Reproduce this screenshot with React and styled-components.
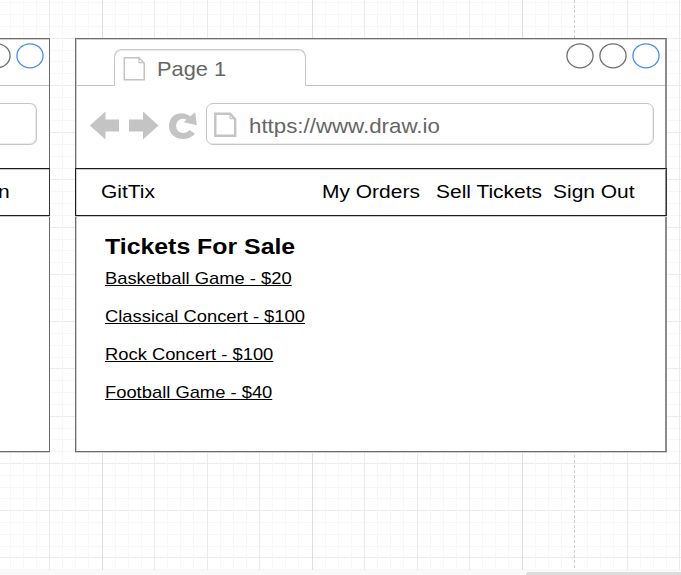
import React from "react";
import styled, { createGlobalStyle } from "styled-components";

const GlobalStyle = createGlobalStyle`
  body {
    margin: 0;
    background: #fff;
    overflow: hidden;
    font-family: "Liberation Sans", Arial, Helvetica, sans-serif;
  }
  *, *::before, *::after { box-sizing: border-box; }
`;

const Canvas = styled.main`
  position: relative;
  width: 681px;
  height: 575px;
  overflow: hidden;
  background: #fff;
`;

const GridLines = styled.svg`
  display: block;
`;

const ScrollTrack = styled.div`
  position: absolute;
  left: 0;
  right: 0;
  bottom: 0;
  height: 5px;
  padding-top: 2px;
  background: #f8f9f9;
`;

const ScrollThumb = styled.div`
  height: 3px;
  margin-left: 526px;
  border-top-left-radius: 3px;
  background: #dcdcdc;
`;

const BrowserWindow = styled.section`
  position: absolute;
  top: 38px;
  left: ${(p) => p.$left}px;
  width: ${(p) => p.$width}px;
  height: 414px;
  display: flex;
  flex-direction: column;
  background: #fff;
  border: 1px solid #6c6c6c;
  border-right-width: ${(p) => (p.$clipped ? 1 : 2)}px;
  border-right-color: ${(p) => (p.$clipped ? "#6c6c6c" : "#8c8c8c")};
  border-left-width: ${(p) => (p.$clipped ? 0 : 1)}px;
  box-shadow: 0 1px 0 #d0d0d0, inset ${(p) => (p.$clipped ? 0 : 1)}px 1px 0 #cfcfcf;
`;

const TabStrip = styled.header`
  display: flex;
  align-items: flex-end;
  height: 47px;
`;

const StripEdge = styled.div`
  height: 47px;
  min-width: 0;
  border-bottom: 1px solid #c2c2c2;
  ${(p) => (p.$width ? `width: ${p.$width}px;` : "flex: 1;")}
  display: flex;
  justify-content: flex-end;
  gap: 5px;
  padding: 4px ${(p) => p.$pad || 0}px 0 0;
`;

const Tab = styled.div`
  display: flex;
  align-items: center;
  gap: 11px;
  width: 192px;
  height: 37px;
  padding: 2px 0 0 8px;
  border: 1.5px solid #c6c6c6;
  border-bottom: 0;
  border-radius: 8px 8px 0 0;
  box-shadow: inset 0 1px 0 #ececec;
`;

const Circle = styled.svg`
  flex: none;
  width: 28px;
  height: 26px;
  fill: none;
  stroke: ${(p) => (p.$active ? "#4a90e8" : "#707070")};
  stroke-width: 1.3;
`;

const Toolbar = styled.div`
  display: flex;
  align-items: center;
  height: 82px;
  padding: 0 ${(p) => (p.$clipped ? 12 : 11)}px 5px ${(p) => (p.$clipped ? 0 : 13)}px;
`;

const ToolIcon = styled.svg`
  flex: none;
  width: ${(p) => p.$width}px;
  height: 32px;
  margin-right: ${(p) => p.$gap}px;
  fill: #c4c4c4;
`;

const AddressBar = styled.div`
  flex: 1;
  display: flex;
  align-items: center;
  height: 42px;
  margin-bottom: 1px;
  padding: 1px 0 0 ${(p) => (p.$clipped ? 0 : 7)}px;
  gap: 11.5px;
  border: 1.5px solid #c6c6c6;
  border-radius: 7px;
  box-shadow: inset -1px -1px 0 #ececec;
  ${(p) => p.$clipped && "border-left: 0; border-top-left-radius: 0; border-bottom-left-radius: 0;"}
`;

const PageIcon = styled.svg`
  flex: none;
  width: 23px;
  height: 26px;
  fill: none;
  stroke: #c4c4c4;
`;

const Label = styled.span`
  display: block;
  flex: none;
  width: max-content;
  white-space: pre;
  font-size: ${(p) => p.$size}px;
  line-height: 24px;
  color: ${(p) => p.$color || "#000"};
  transform: scaleX(${(p) => p.$stretch || 1.11});
  transform-origin: left center;
`;

const Address = styled(Label)`
  padding-top: 2px;
`;

const NavBar = styled.nav`
  display: flex;
  align-items: center;
  height: 48px;
  margin: 0 ${(p) => (p.$clipped ? -1 : -2)}px 0 ${(p) => (p.$clipped ? 0 : -1)}px;
  border: 1px solid #1c1c1c;
  border-right-color: #333;
  ${(p) => p.$clipped && "border-left: 0; justify-content: flex-end; padding-right: 40.5px;"}
  box-shadow: inset 0 1px 0 #c8c8c8, 0 1px 0 #c8c8c8;
`;

const NavSlot = styled.div`
  flex: none;
  width: ${(p) => p.$width}px;
`;

const Content = styled.div`
  padding: 19px 0 0 28.5px;
`;

const Heading = styled(Label).attrs({ as: "h1" })`
  margin: 0;
  font-weight: 700;
`;

const TicketList = styled.ul`
  display: grid;
  grid-auto-rows: 37.8px;
  margin: 8.3px 0 0;
  padding: 0;
  list-style: none;
`;

const TicketLink = styled(Label).attrs({ as: "a" })`
  text-decoration: underline;
  text-decoration-thickness: 1.3px;
  text-underline-offset: 1px;
`;

const tickets = [
  "Basketball Game - $20",
  "Classical Concert - $100",
  "Rock Concert - $100",
  "Football Game - $40",
];

const strongColumns = [4, 20, 36];
const dashedColumn = 40;

function columnTone(i) {
  if (i === dashedColumn) return "#cfcfcf";
  if (strongColumns.includes(i)) return "#dedede";
  return i % 4 === 0 ? "#ebebeb" : "#f7f7f7";
}

function Grid() {
  const columns = [];
  for (let i = -3; i < 49; i++) {
    const x = Math.floor(49.5 + i * 13.125) + 0.5;
    columns.push(
      <line key={i} x1={x} x2={x} y1="0" y2="570"
        stroke={columnTone(i)}
        strokeDasharray={i === dashedColumn ? "3 2" : undefined} />
    );
  }
  const rows = [];
  for (let i = -3; i < 46; i++) {
    const y = Math.floor(38.2 + i * 11.8125) + 0.5;
    rows.push(
      <line key={i} x1="0" x2="681" y1={y} y2={y} stroke={i % 4 === 0 ? "#ececec" : "#f7f7f7"} />
    );
  }
  return (
    <GridLines width="681" height="575" aria-hidden="true">
      {rows}
      {columns}
    </GridLines>
  );
}

function WindowCircle({ active }) {
  return (
    <Circle $active={active} viewBox="0 0 28 26">
      <ellipse cx="14" cy="12.8" rx="13.1" ry="12" />
    </Circle>
  );
}

function Page({ weight }) {
  return (
    <PageIcon viewBox="0 0 23 26" strokeWidth={weight}>
      <path d="M1.3 1.8H16L21.2 7.3V23.7H1.3Z" />
      <path d="M16 1.8V6.7H21.2" strokeWidth="1.2" />
    </PageIcon>
  );
}

export default function App() {
  return (
    <>
      <GlobalStyle />
      <Canvas>
        <Grid />

        <BrowserWindow $left={0} $width={50} $clipped>
          <TabStrip>
            <StripEdge $pad={5.5}>
              <WindowCircle />
              <WindowCircle active />
            </StripEdge>
          </TabStrip>
          <Toolbar $clipped>
            <AddressBar $clipped />
          </Toolbar>
          <NavBar $clipped>
            <Label $size={18.9}>n</Label>
          </NavBar>
        </BrowserWindow>

        <BrowserWindow $left={75} $width={592}>
          <TabStrip>
            <StripEdge $width={38} />
            <Tab>
              <Page weight="1.5" />
              <Label $size={20.2} $stretch={1.08} $color="#666">Page 1</Label>
            </Tab>
            <StripEdge $pad={5}>
              <WindowCircle />
              <WindowCircle />
              <WindowCircle active />
            </StripEdge>
          </TabStrip>
          <Toolbar>
            <ToolIcon $width={30} $gap={10} viewBox="0 0 30 32">
              <path d="M.8 16.5 16.5 2.5V10.5H30V22.5H16.5V30.5Z" />
            </ToolIcon>
            <ToolIcon $width={30} $gap={10} viewBox="0 0 30 32">
              <path d="M29.5 16.5 14 2.5V10.5H0V22.5H14V30.5Z" />
            </ToolIcon>
            <ToolIcon $width={28} $gap={9} viewBox="0 0 28 32">
              <path d="M21.2 7.2 26.2 3.3 27.8 16.2 14.5 13.3 17.5 10.7C12.5 8.1 7.2 11.5 7.2 16.9C7.2 24.3 16.5 26.2 20.5 21L26 24.7C18.5 34 0 30.7 0 16.9C0 5 12.6.9 21.2 7.2Z" />
            </ToolIcon>
            <AddressBar>
              <Page weight="2.4" />
              <Address $size={19.8} $stretch={1.127} $color="#666">https://www.draw.io</Address>
            </AddressBar>
          </Toolbar>
          <NavBar>
            <NavSlot $width={25} />
            <NavSlot $width={220.8}><Label $size={18.9}>GitTix</Label></NavSlot>
            <NavSlot $width={114.2}><Label $size={18.9}>My Orders</Label></NavSlot>
            <NavSlot $width={117.2}><Label $size={18.9}>Sell Tickets</Label></NavSlot>
            <Label $size={18.9}>Sign Out</Label>
          </NavBar>
          <Content>
            <Heading $size={22.4}>Tickets For Sale</Heading>
            <TicketList>
              {tickets.map((ticket) => (
                <li key={ticket}>
                  <TicketLink $size={16.6} $stretch={1.106}>{ticket}</TicketLink>
                </li>
              ))}
            </TicketList>
          </Content>
        </BrowserWindow>

        <ScrollTrack>
          <ScrollThumb />
        </ScrollTrack>
      </Canvas>
    </>
  );
}
